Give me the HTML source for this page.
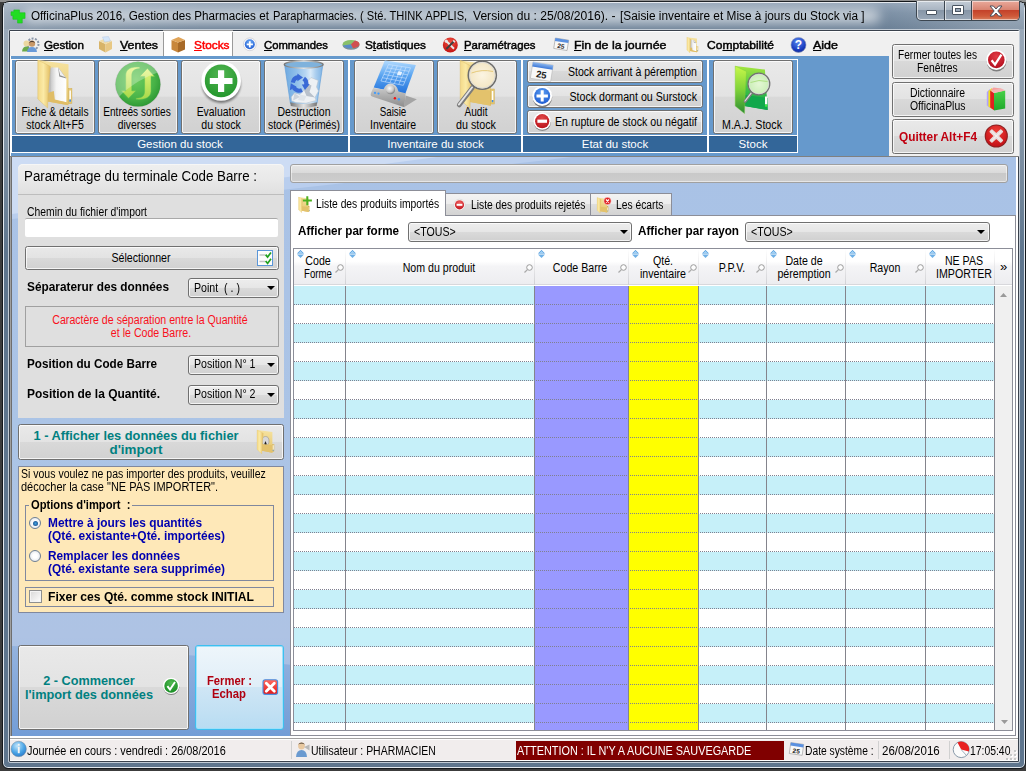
<!DOCTYPE html>
<html lang="fr"><head><meta charset="utf-8"><title>OfficinaPlus 2016</title>
<style>
html,body{margin:0;padding:0;}
body{width:1026px;height:771px;position:relative;overflow:hidden;background:#3c3c3c;
 font-family:"Liberation Sans",sans-serif;font-size:12px;}
div,span.t,svg{position:absolute;box-sizing:border-box;}
span.t{white-space:pre;display:block;}
svg{overflow:visible;}
.btn{border:1px solid #707070;border-radius:2.5px;
 background:linear-gradient(#e9e9e9 0%,#e3e3e3 49%,#d9d9d9 50%,#d1d1d1 100%);
 box-shadow:inset 0 0 0 1px rgba(255,255,255,.75);}
.combo{border:1px solid #707070;border-radius:3px;
 background:linear-gradient(#ededed 0%,#e6e6e6 49%,#dadada 50%,#d0d0d0 100%);
 box-shadow:inset 0 0 0 1px rgba(255,255,255,.75);}
.arr{width:0;height:0;border-left:4px solid transparent;border-right:4px solid transparent;border-top:4px solid #000;}

</style></head><body>
<div style="left:0px;top:0px;width:1026px;height:2px;background:#8f8f8f;"></div>
<div style="left:2px;top:1px;width:1024px;height:768px;border:1px solid #14181c;border-radius:7px 7px 6px 6px;background:linear-gradient(#a9b6c4 0px,#a3b1c0 14px,#9aa9b9 28px,#8e9eae 100px,#5f768e 250px,#5f768e 100%);box-shadow:inset 0 0 0 1px #e3e8ee;"></div>
<div style="left:4px;top:3px;width:1020px;height:26px;background:linear-gradient(90deg,rgba(255,255,255,.28) 0px,rgba(255,255,255,.12) 40px,rgba(255,255,255,0) 200px,rgba(255,255,255,0) 880px,rgba(255,255,255,.22) 1000px),linear-gradient(#93a4b7 0px,#7d91a6 10px,#6b8096 26px);"></div>
<div style="left:24px;top:9px;width:856px;height:14px;background:rgba(255,255,255,.62);filter:blur(6px);border-radius:8px;"></div>
<div style="left:8px;top:29px;width:1012px;height:734px;border:1px solid #c3ccd6;border-radius:2px;"></div>
<div style="left:9px;top:30px;width:1010px;height:732px;border:1px solid #3a424d;background:#f0f0f0;border-radius:1px;"></div>
<svg style="left:10.6px;top:8.6px" width="15" height="15" viewBox="0 0 16 16"><path d="M3 1h6v3h6v6h-3v5H7v-4H2V7H0V3h3z" fill="#22dd22"/><path d="M3 1h6v3h6v6h-3v5H7v-4H2V7H0V3h3z" fill="none" stroke="#18c018" stroke-width=".6"/></svg>
<span class="t" style="top:8px;font-size:12.5px;line-height:16px;color:#000;left:30.5px;transform-origin:0 50%;transform:scaleX(0.9338);">OfficinaPlus 2016, Gestion des Pharmacies et</span>
<span class="t" style="top:8px;font-size:12.5px;line-height:16px;color:#000;left:273.4px;transform-origin:0 50%;transform:scaleX(0.8883);">Parapharmacies. ( Sté. THINK APPLIS,</span>
<span class="t" style="top:8px;font-size:12.5px;line-height:16px;color:#000;left:472.9px;transform-origin:0 50%;transform:scaleX(0.9673);">Version du : 25/08/2016). -</span>
<span class="t" style="top:8px;font-size:12.5px;line-height:16px;color:#000;left:619.8px;transform-origin:0 50%;transform:scaleX(0.9464);">[Saisie inventaire et Mise à jours du Stock via ]</span>
<div style="left:916px;top:1px;width:104px;height:20px;border:1px solid #3c4650;border-top:none;border-radius:0 0 5px 5px;overflow:hidden;background:linear-gradient(#c3ccd6 0%,#aab6c3 45%,#8796a7 50%,#9aa8b8 100%);box-shadow:inset 0 0 0 1px rgba(255,255,255,.6);"><div style="left:27px;top:0;width:1px;height:20px;background:#3c4650"></div><div style="left:28px;top:0;width:1px;height:20px;background:rgba(255,255,255,.6)"></div><div style="left:54px;top:0;width:1px;height:20px;background:#3c4650"></div><div style="left:55px;top:0;width:48px;height:19px;background:linear-gradient(#e9a99b 0%,#d98573 45%,#c4422a 50%,#cf5a3a 80%,#d98060 100%);box-shadow:inset 0 0 0 1px rgba(255,255,255,.5)"></div><div style="left:9px;top:9px;width:11px;height:5px;background:#fff;border:1px solid #4a5562;border-radius:1px"></div><div style="left:35px;top:4px;width:12px;height:10px;background:#fff;border:1px solid #4a5562;border-radius:1px"></div><div style="left:38px;top:7px;width:6px;height:4px;background:#9aa8b8;border:1px solid #4a5562"></div><svg style="left:72px;top:4px" width="14" height="12" viewBox="0 0 14 12"><path d="M1 1h3.4L7 4l2.6-3H13L8.8 6l4.2 5H9.6L7 8l-2.6 3H1l4.2-5z" fill="#fff" stroke="#4a4f5c" stroke-width="1"/></svg></div>
<div style="left:10px;top:31px;width:1009px;height:1px;background:#fff;"></div>
<div style="left:163px;top:30px;width:70px;height:27px;background:#fff;border:1px solid #9a9a9a;border-bottom:none;"></div>
<span class="t" style="top:38px;font-size:11.5px;line-height:14px;color:#000;left:44px;transform-origin:0 50%;transform:scaleX(1.0093);-webkit-text-stroke:.45px #000;"><u>G</u>estion</span>
<span class="t" style="top:38px;font-size:11.5px;line-height:14px;color:#000;left:120px;transform-origin:0 50%;transform:scaleX(1.0805);-webkit-text-stroke:.45px #000;"><u>V</u>entes</span>
<span class="t" style="top:38px;font-size:11.5px;line-height:14px;color:#ff0000;left:194px;transform-origin:0 50%;transform:scaleX(1.0286);-webkit-text-stroke:.45px #ff0000;"><u>S</u>tocks</span>
<span class="t" style="top:38px;font-size:11.5px;line-height:14px;color:#000;left:264px;transform-origin:0 50%;transform:scaleX(0.9817);-webkit-text-stroke:.45px #000;"><u>C</u>ommandes</span>
<span class="t" style="top:38px;font-size:11.5px;line-height:14px;color:#000;left:365px;transform-origin:0 50%;transform:scaleX(1.0261);-webkit-text-stroke:.45px #000;">S<u>t</u>atistiques</span>
<span class="t" style="top:38px;font-size:11.5px;line-height:14px;color:#000;left:464px;transform-origin:0 50%;transform:scaleX(0.9899);-webkit-text-stroke:.45px #000;"><u>P</u>aramétrages</span>
<span class="t" style="top:38px;font-size:11.5px;line-height:14px;color:#000;left:574px;transform-origin:0 50%;transform:scaleX(1.0797);-webkit-text-stroke:.45px #000;"><u>F</u>in de la journée</span>
<span class="t" style="top:38px;font-size:11.5px;line-height:14px;color:#000;left:707px;transform-origin:0 50%;transform:scaleX(1.0482);-webkit-text-stroke:.45px #000;">Co<u>m</u>ptabilité</span>
<span class="t" style="top:38px;font-size:11.5px;line-height:14px;color:#000;left:813px;transform-origin:0 50%;transform:scaleX(1.0861);-webkit-text-stroke:.45px #000;"><u>A</u>ide</span>
<div style="left:10px;top:56px;width:879px;height:100px;background:#6699cc;border-left:1px solid #fff;"></div>
<div style="left:10px;top:156px;width:1009px;height:1px;background:#808080;"></div>
<div style="left:889px;top:31px;width:130px;height:125px;background:#f0f0f0;"></div>
<div style="left:10px;top:31px;width:1009px;height:1px;background:#fff;"></div>
<div style="left:11px;top:59px;width:338px;height:94px;border:1px solid #fff;"></div>
<div style="left:12px;top:135px;width:336px;height:1px;background:#fff;"></div>
<div style="left:12px;top:136px;width:336px;height:16px;background:linear-gradient(#2a5a90 0px,#336699 1.5px);"></div>
<span class="t" style="top:137px;font-size:11.5px;line-height:14px;color:#fff;left:180.0px;transform-origin:50% 50%;transform:translateX(-50%) scaleX(1.0000);">Gestion du stock</span>
<div style="left:349px;top:59px;width:173px;height:94px;border:1px solid #fff;"></div>
<div style="left:350px;top:135px;width:171px;height:1px;background:#fff;"></div>
<div style="left:350px;top:136px;width:171px;height:16px;background:linear-gradient(#2a5a90 0px,#336699 1.5px);"></div>
<span class="t" style="top:137px;font-size:11.5px;line-height:14px;color:#fff;left:435.5px;transform-origin:50% 50%;transform:translateX(-50%) scaleX(1.0000);">Inventaire du stock</span>
<div style="left:522px;top:59px;width:186px;height:94px;border:1px solid #fff;"></div>
<div style="left:523px;top:135px;width:184px;height:1px;background:#fff;"></div>
<div style="left:523px;top:136px;width:184px;height:16px;background:linear-gradient(#2a5a90 0px,#336699 1.5px);"></div>
<span class="t" style="top:137px;font-size:11.5px;line-height:14px;color:#fff;left:615.0px;transform-origin:50% 50%;transform:translateX(-50%) scaleX(1.0000);">Etat du stock</span>
<div style="left:708px;top:59px;width:90px;height:94px;border:1px solid #fff;"></div>
<div style="left:709px;top:135px;width:88px;height:1px;background:#fff;"></div>
<div style="left:709px;top:136px;width:88px;height:16px;background:linear-gradient(#2a5a90 0px,#336699 1.5px);"></div>
<span class="t" style="top:137px;font-size:11.5px;line-height:14px;color:#fff;left:753.0px;transform-origin:50% 50%;transform:translateX(-50%) scaleX(1.0000);">Stock</span>
<div class="btn" style="left:15px;top:60px;width:80px;height:74px;"></div>
<span class="t" style="top:104px;font-size:12px;line-height:16px;color:#000;left:55px;transform-origin:50% 50%;transform:translateX(-50%) scaleX(0.8513);">Fiche &amp; détails</span>
<span class="t" style="top:117px;font-size:12px;line-height:16px;color:#000;left:55px;transform-origin:50% 50%;transform:translateX(-50%) scaleX(0.8752);">stock Alt+F5</span>
<div class="btn" style="left:98px;top:60px;width:80px;height:74px;"></div>
<span class="t" style="top:104px;font-size:12px;line-height:16px;color:#000;left:137.3px;transform-origin:50% 50%;transform:translateX(-50%) scaleX(0.8446);">Entreés sorties</span>
<span class="t" style="top:117px;font-size:12px;line-height:16px;color:#000;left:137.3px;transform-origin:50% 50%;transform:translateX(-50%) scaleX(0.8616);">diverses</span>
<div class="btn" style="left:181px;top:60px;width:80px;height:74px;"></div>
<span class="t" style="top:104px;font-size:12px;line-height:16px;color:#000;left:220.8px;transform-origin:50% 50%;transform:translateX(-50%) scaleX(0.8690);">Evaluation</span>
<span class="t" style="top:117px;font-size:12px;line-height:16px;color:#000;left:220.8px;transform-origin:50% 50%;transform:translateX(-50%) scaleX(0.8839);">du stock</span>
<div class="btn" style="left:264px;top:60px;width:80px;height:74px;"></div>
<span class="t" style="top:104px;font-size:12px;line-height:16px;color:#000;left:303.8px;transform-origin:50% 50%;transform:translateX(-50%) scaleX(0.8733);">Destruction</span>
<span class="t" style="top:117px;font-size:12px;line-height:16px;color:#000;left:303.8px;transform-origin:50% 50%;transform:translateX(-50%) scaleX(0.8639);">stock (Périmés)</span>
<div class="btn" style="left:354px;top:60px;width:80px;height:74px;"></div>
<span class="t" style="top:104px;font-size:12px;line-height:16px;color:#000;left:392.7px;transform-origin:50% 50%;transform:translateX(-50%) scaleX(0.8138);">Saisie</span>
<span class="t" style="top:117px;font-size:12px;line-height:16px;color:#000;left:392.7px;transform-origin:50% 50%;transform:translateX(-50%) scaleX(0.8729);">Inventaire</span>
<div class="btn" style="left:437px;top:60px;width:80px;height:74px;"></div>
<span class="t" style="top:104px;font-size:12px;line-height:16px;color:#000;left:475.9px;transform-origin:50% 50%;transform:translateX(-50%) scaleX(0.8409);">Audit</span>
<span class="t" style="top:117px;font-size:12px;line-height:16px;color:#000;left:475.9px;transform-origin:50% 50%;transform:translateX(-50%) scaleX(0.8951);">du stock</span>
<div class="btn" style="left:713px;top:60px;width:80px;height:74px;"></div>
<span class="t" style="top:117px;font-size:12px;line-height:16px;color:#000;left:752.1px;transform-origin:50% 50%;transform:translateX(-50%) scaleX(0.8909);">M.A.J. Stock</span>
<div class="btn" style="left:527px;top:60px;width:176px;height:23px;"></div>
<span class="t" style="top:64px;font-size:12px;line-height:16px;color:#000;left:697px;transform-origin:100% 50%;transform:translateX(-100%) scaleX(0.8791);">Stock arrivant à péremption</span>
<div class="btn" style="left:527px;top:85px;width:176px;height:23px;"></div>
<span class="t" style="top:89px;font-size:12px;line-height:16px;color:#000;left:697px;transform-origin:100% 50%;transform:translateX(-100%) scaleX(0.8850);">Stock dormant ou Surstock</span>
<div class="btn" style="left:527px;top:110px;width:176px;height:24px;"></div>
<span class="t" style="top:114px;font-size:12px;line-height:16px;color:#000;left:697px;transform-origin:100% 50%;transform:translateX(-100%) scaleX(0.8869);">En rupture de stock ou négatif</span>
<div class="btn" style="left:892px;top:44px;width:122px;height:35px;"></div>
<div class="btn" style="left:892px;top:82px;width:122px;height:35px;"></div>
<div class="btn" style="left:892px;top:119px;width:122px;height:35px;"></div>
<span class="t" style="top:47px;font-size:12px;line-height:16px;color:#000;left:898.4px;transform-origin:0 50%;transform:scaleX(0.8461);">Fermer toutes les</span>
<span class="t" style="top:60px;font-size:12px;line-height:16px;color:#000;left:917.1px;transform-origin:0 50%;transform:scaleX(0.8573);">Fenêtres</span>
<span class="t" style="top:85px;font-size:12px;line-height:16px;color:#000;left:910.2px;transform-origin:0 50%;transform:scaleX(0.8680);">Dictionnaire</span>
<span class="t" style="top:98px;font-size:12px;line-height:16px;color:#000;left:909.9px;transform-origin:0 50%;transform:scaleX(0.8682);">OfficinaPlus</span>
<span class="t" style="top:129px;font-size:12px;line-height:16px;color:#c00010;font-weight:bold;left:898.7px;transform-origin:0 50%;transform:scaleX(0.9845);">Quitter Alt+F4</span>
<div style="left:10px;top:157px;width:1008px;height:579px;background:linear-gradient(#a9c2e6 0px,#abc4e6 270px,#aec3e4 480px,#a4bde3 520px,#739dd6 579px);"></div>
<div style="left:10px;top:157px;width:1px;height:581px;background:#a0a0a0;"></div>
<div style="left:11px;top:157px;width:1px;height:579px;background:#6e6e6e;"></div>
<div style="left:1016px;top:157px;width:2px;height:581px;background:#fff;"></div>
<div style="left:10px;top:736px;width:1008px;height:2px;background:#fff;"></div>
<svg style="left:12px;top:640px" width="1004" height="96" viewBox="0 0 1004 96"><defs><linearGradient id="sw2" x1="0" y1="0" x2="0" y2="1"><stop offset="0" stop-color="#94b3df"/><stop offset="1" stop-color="#739dd6"/></linearGradient></defs><path d="M0 6Q150 10 290 26V96H0Z" fill="url(#sw2)"/></svg>
<div style="left:10px;top:738px;width:1008px;height:23px;background:#f1eded;border-top:1px solid #a0a0a0;border-bottom:1px solid #fff;box-shadow:inset 0 1px 0 #fff;"></div>
<svg style="left:12px;top:157px" width="1007" height="70" viewBox="0 0 1007 70"><path d="M0 0H560Q360 24 0 62Z" fill="#b9ceee"/><path d="M0 0H425Q290 18 0 57Z" fill="#cddcf4"/></svg>
<div style="left:18px;top:164px;width:266px;height:254px;background:#dfdfdf;border-radius:5px 5px 0 0;"></div>
<div style="left:18px;top:164px;width:266px;height:31px;background:linear-gradient(#efefef,#e9e9e9 50%,#e0e0e0);border-radius:5px 5px 0 0;border-bottom:1px solid #bdbdbd;box-shadow:inset 0 1px 0 #f6f6f6;"></div>
<span class="t" style="top:167px;font-size:14px;line-height:18px;color:#000;left:24px;transform-origin:0 50%;transform:scaleX(0.9505);">Paramétrage du terminale Code Barre :</span>
<span class="t" style="top:204px;font-size:12px;line-height:16px;color:#000;left:26.5px;transform-origin:0 50%;transform:scaleX(0.8632);">Chemin du fichier d'import</span>
<div style="left:25px;top:218px;width:253px;height:19px;background:#fff;border-top:1px solid #a9a9a9;border-radius:2px;"></div>
<div class="btn" style="left:25px;top:246px;width:254px;height:24px;"></div>
<span class="t" style="top:250px;font-size:12px;line-height:16px;color:#000;left:141px;transform-origin:50% 50%;transform:translateX(-50%) scaleX(0.8850);">Sélectionner</span>
<span class="t" style="top:279px;font-size:12.5px;line-height:16px;color:#000;font-weight:bold;left:27px;transform-origin:0 50%;transform:scaleX(0.9463);">Séparaterur des données</span>
<div class="combo" style="left:188px;top:278px;width:91px;height:20px;"></div>
<span class="t" style="top:280px;font-size:12px;line-height:16px;color:#000;left:194px;transform-origin:0 50%;transform:scaleX(0.8850);">Point  ( . )</span>
<div class="arr" style="left:267px;top:286px;width:0px;height:0px;"></div>
<div style="left:25px;top:306px;width:254px;height:41px;border:1px solid #a0a0a0;"></div>
<span class="t" style="top:312px;font-size:12px;line-height:16px;color:#f8101c;left:149.5px;transform-origin:50% 50%;transform:translateX(-50%) scaleX(0.8850);">Caractère de séparation entre la Quantité</span>
<span class="t" style="top:325px;font-size:12px;line-height:16px;color:#f8101c;left:151px;transform-origin:50% 50%;transform:translateX(-50%) scaleX(0.8850);">et le Code Barre.</span>
<span class="t" style="top:356px;font-size:12.5px;line-height:16px;color:#000;font-weight:bold;left:27px;transform-origin:0 50%;transform:scaleX(0.9359);">Position du Code Barre</span>
<div class="combo" style="left:188px;top:355px;width:91px;height:20px;"></div>
<span class="t" style="top:356px;font-size:12px;line-height:16px;color:#000;left:194px;transform-origin:0 50%;transform:scaleX(0.8850);">Position N° 1</span>
<div class="arr" style="left:267px;top:363px;width:0px;height:0px;"></div>
<span class="t" style="top:386px;font-size:12.5px;line-height:16px;color:#000;font-weight:bold;left:27px;transform-origin:0 50%;transform:scaleX(0.9575);">Position de la Quantité.</span>
<div class="combo" style="left:188px;top:385px;width:91px;height:20px;"></div>
<span class="t" style="top:386px;font-size:12px;line-height:16px;color:#000;left:194px;transform-origin:0 50%;transform:scaleX(0.8850);">Position N° 2</span>
<div class="arr" style="left:267px;top:393px;width:0px;height:0px;"></div>
<div class="btn" style="left:18px;top:424px;width:266px;height:36px;"></div>
<span class="t" style="top:427px;font-size:13px;line-height:17px;color:#008080;font-weight:bold;left:136px;transform-origin:50% 50%;transform:translateX(-50%) scaleX(0.9842);">1 - Afficher les données du fichier</span>
<span class="t" style="top:441px;font-size:13px;line-height:17px;color:#008080;font-weight:bold;left:136px;transform-origin:50% 50%;transform:translateX(-50%) scaleX(1.0296);">d'import</span>
<div style="left:18px;top:466px;width:266px;height:147px;background:#fee8b8;border:1px solid #80889e;"></div>
<span class="t" style="top:466px;font-size:12px;line-height:16px;color:#000;left:20.7px;transform-origin:0 50%;transform:scaleX(0.8759);">Si vous voulez ne pas importer des produits, veuillez</span>
<span class="t" style="top:479px;font-size:12px;line-height:16px;color:#000;left:20.7px;transform-origin:0 50%;transform:scaleX(0.9142);">décocher la case "NE PAS IMPORTER".</span>
<div style="left:25px;top:505px;width:249px;height:76px;border:1px solid #80889e;"></div>
<div style="left:29px;top:498px;width:103px;height:14px;background:#fee8b8;"></div>
<span class="t" style="top:497px;font-size:12px;line-height:16px;color:#000;font-weight:bold;left:30.8px;transform-origin:0 50%;transform:scaleX(0.9313);">Options d'import  :</span>
<span class="t" style="top:515px;font-size:12px;line-height:16px;color:#0000b0;font-weight:bold;left:48px;transform-origin:0 50%;transform:scaleX(0.9911);">Mettre à jours les quantités</span>
<span class="t" style="top:528px;font-size:12px;line-height:16px;color:#0000b0;font-weight:bold;left:48px;transform-origin:0 50%;transform:scaleX(0.9959);">(Qté. existante+Qté. importées)</span>
<span class="t" style="top:548px;font-size:12px;line-height:16px;color:#0000b0;font-weight:bold;left:48px;transform-origin:0 50%;transform:scaleX(0.9846);">Remplacer les données</span>
<span class="t" style="top:561px;font-size:12px;line-height:16px;color:#0000b0;font-weight:bold;left:48px;transform-origin:0 50%;transform:scaleX(0.9903);">(Qté. existante sera supprimée)</span>
<div style="left:29px;top:517px;width:12px;height:12px;border-radius:50%;border:1px solid #6d7f93;background:radial-gradient(#fff 30%,#d8dde3 100%);"><div style="left:2.5px;top:2.5px;width:5px;height:5px;border-radius:50%;background:radial-gradient(#3fa0e0,#103a78)"></div></div>
<div style="left:29px;top:550px;width:12px;height:12px;border-radius:50%;border:1px solid #6d7f93;background:radial-gradient(#fff 30%,#d8dde3 100%);"></div>
<div style="left:25px;top:587px;width:249px;height:20px;border:1px solid #80889e;"></div>
<div style="left:29px;top:590px;width:13px;height:13px;border:1px solid #8e8f8f;background:linear-gradient(135deg,#d8d8d8,#fff);box-shadow:inset 0 0 0 1px #f4f4f4;"></div>
<span class="t" style="top:589px;font-size:12px;line-height:16px;color:#000;font-weight:bold;left:48px;transform-origin:0 50%;transform:scaleX(1.0094);">Fixer ces Qté. comme stock INITIAL</span>
<div class="btn" style="left:18px;top:645px;width:171px;height:85px;"></div>
<span class="t" style="top:672px;font-size:13px;line-height:17px;color:#008080;font-weight:bold;left:89.3px;transform-origin:50% 50%;transform:translateX(-50%) scaleX(0.9742);">2 - Commencer</span>
<span class="t" style="top:686px;font-size:13px;line-height:17px;color:#008080;font-weight:bold;left:89.2px;transform-origin:50% 50%;transform:translateX(-50%) scaleX(0.9829);">l'import des données</span>
<div style="left:195px;top:645px;width:89px;height:85px;border:1px solid #3cc0f0;border-radius:3px;background:linear-gradient(#eef6fb 0%,#e0eef8 49%,#cfe6f5 50%,#b8dcf2 100%);box-shadow:inset 0 0 0 1px #9fe0fa;"></div>
<span class="t" style="top:673px;font-size:12px;line-height:16px;color:#b00010;font-weight:bold;left:206.6px;transform-origin:0 50%;transform:scaleX(0.9372);">Fermer :</span>
<span class="t" style="top:686px;font-size:12px;line-height:16px;color:#b00010;font-weight:bold;left:211.7px;transform-origin:0 50%;transform:scaleX(0.9441);">Echap</span>
<div style="left:290px;top:164px;width:718px;height:19px;border:1px solid #a0a0a0;border-radius:3px;background:linear-gradient(#e6e6e6 0%,#dadada 45%,#c9c9c9 50%,#cdcdcd 100%);box-shadow:inset 0 0 0 1px rgba(255,255,255,.5);"></div>
<div style="left:290px;top:215px;width:726px;height:521px;background:#fff;border:1px solid #8c8e98;"></div>
<div style="left:445px;top:193px;width:146px;height:23px;border:1px solid #8c8e98;background:linear-gradient(#f3f3f3 0%,#ececec 49%,#dedede 50%,#d3d3d3 100%);"></div>
<div style="left:590px;top:193px;width:82px;height:23px;border:1px solid #8c8e98;background:linear-gradient(#f3f3f3 0%,#ececec 49%,#dedede 50%,#d3d3d3 100%);"></div>
<div style="left:290px;top:190px;width:156px;height:25px;border:1px solid #8c8e98;border-bottom:none;background:#fff;"></div>
<div style="left:291px;top:215px;width:154px;height:1px;background:#fff;"></div>
<span class="t" style="top:196px;font-size:12px;line-height:16px;color:#000;left:316.2px;transform-origin:0 50%;transform:scaleX(0.8591);">Liste des produits importés</span>
<span class="t" style="top:197px;font-size:12px;line-height:16px;color:#000;left:470.5px;transform-origin:0 50%;transform:scaleX(0.8583);">Liste des produits rejetés</span>
<span class="t" style="top:197px;font-size:12px;line-height:16px;color:#000;left:615.6px;transform-origin:0 50%;transform:scaleX(0.8562);">Les écarts</span>
<span class="t" style="top:222px;font-size:13px;line-height:17px;color:#000;font-weight:bold;left:297.5px;transform-origin:0 50%;transform:scaleX(0.8963);">Afficher par forme</span>
<div class="combo" style="left:408px;top:222px;width:224px;height:20px;"></div>
<span class="t" style="top:224px;font-size:12px;line-height:16px;color:#000;left:414px;transform-origin:0 50%;transform:scaleX(0.8850);">&lt;TOUS&gt;</span>
<div class="arr" style="left:620px;top:230px;width:0px;height:0px;"></div>
<span class="t" style="top:222px;font-size:13px;line-height:17px;color:#000;font-weight:bold;left:638px;transform-origin:0 50%;transform:scaleX(0.9020);">Afficher par rayon</span>
<div class="combo" style="left:745px;top:222px;width:245px;height:20px;"></div>
<span class="t" style="top:224px;font-size:12px;line-height:16px;color:#000;left:751px;transform-origin:0 50%;transform:scaleX(0.8850);">&lt;TOUS&gt;</span>
<div class="arr" style="left:977px;top:230px;width:0px;height:0px;"></div>
<div style="left:293px;top:248px;width:720px;height:483px;border:1px solid #8c8e98;background:#fff;"></div>
<div style="left:294px;top:249px;width:718px;height:36px;background:linear-gradient(#fff 0%,#fff 35%,#f4f4f6 50%,#ededf0 100%);border-bottom:1px solid #d8d8dc;"></div>
<div style="left:294px;top:286px;width:701px;height:444px;background:repeating-linear-gradient(#c6f0f9 0px,#c6f0f9 19px,#fff 19px,#fff 38px);"></div>
<div style="left:535px;top:286px;width:94px;height:444px;background:#9999ff;"></div>
<div style="left:629px;top:286px;width:70px;height:444px;background:#ffff00;"></div>
<div style="left:294px;top:304px;width:701px;height:1px;background:repeating-linear-gradient(90deg,#808090 0px,#808090 1px,transparent 1px,transparent 2px);"></div>
<div style="left:294px;top:323px;width:701px;height:1px;background:repeating-linear-gradient(90deg,#808090 0px,#808090 1px,transparent 1px,transparent 2px);"></div>
<div style="left:294px;top:342px;width:701px;height:1px;background:repeating-linear-gradient(90deg,#808090 0px,#808090 1px,transparent 1px,transparent 2px);"></div>
<div style="left:294px;top:361px;width:701px;height:1px;background:repeating-linear-gradient(90deg,#808090 0px,#808090 1px,transparent 1px,transparent 2px);"></div>
<div style="left:294px;top:380px;width:701px;height:1px;background:repeating-linear-gradient(90deg,#808090 0px,#808090 1px,transparent 1px,transparent 2px);"></div>
<div style="left:294px;top:399px;width:701px;height:1px;background:repeating-linear-gradient(90deg,#808090 0px,#808090 1px,transparent 1px,transparent 2px);"></div>
<div style="left:294px;top:418px;width:701px;height:1px;background:repeating-linear-gradient(90deg,#808090 0px,#808090 1px,transparent 1px,transparent 2px);"></div>
<div style="left:294px;top:437px;width:701px;height:1px;background:repeating-linear-gradient(90deg,#808090 0px,#808090 1px,transparent 1px,transparent 2px);"></div>
<div style="left:294px;top:456px;width:701px;height:1px;background:repeating-linear-gradient(90deg,#808090 0px,#808090 1px,transparent 1px,transparent 2px);"></div>
<div style="left:294px;top:475px;width:701px;height:1px;background:repeating-linear-gradient(90deg,#808090 0px,#808090 1px,transparent 1px,transparent 2px);"></div>
<div style="left:294px;top:494px;width:701px;height:1px;background:repeating-linear-gradient(90deg,#808090 0px,#808090 1px,transparent 1px,transparent 2px);"></div>
<div style="left:294px;top:513px;width:701px;height:1px;background:repeating-linear-gradient(90deg,#808090 0px,#808090 1px,transparent 1px,transparent 2px);"></div>
<div style="left:294px;top:532px;width:701px;height:1px;background:repeating-linear-gradient(90deg,#808090 0px,#808090 1px,transparent 1px,transparent 2px);"></div>
<div style="left:294px;top:551px;width:701px;height:1px;background:repeating-linear-gradient(90deg,#808090 0px,#808090 1px,transparent 1px,transparent 2px);"></div>
<div style="left:294px;top:570px;width:701px;height:1px;background:repeating-linear-gradient(90deg,#808090 0px,#808090 1px,transparent 1px,transparent 2px);"></div>
<div style="left:294px;top:589px;width:701px;height:1px;background:repeating-linear-gradient(90deg,#808090 0px,#808090 1px,transparent 1px,transparent 2px);"></div>
<div style="left:294px;top:608px;width:701px;height:1px;background:repeating-linear-gradient(90deg,#808090 0px,#808090 1px,transparent 1px,transparent 2px);"></div>
<div style="left:294px;top:627px;width:701px;height:1px;background:repeating-linear-gradient(90deg,#808090 0px,#808090 1px,transparent 1px,transparent 2px);"></div>
<div style="left:294px;top:646px;width:701px;height:1px;background:repeating-linear-gradient(90deg,#808090 0px,#808090 1px,transparent 1px,transparent 2px);"></div>
<div style="left:294px;top:665px;width:701px;height:1px;background:repeating-linear-gradient(90deg,#808090 0px,#808090 1px,transparent 1px,transparent 2px);"></div>
<div style="left:294px;top:684px;width:701px;height:1px;background:repeating-linear-gradient(90deg,#808090 0px,#808090 1px,transparent 1px,transparent 2px);"></div>
<div style="left:294px;top:703px;width:701px;height:1px;background:repeating-linear-gradient(90deg,#808090 0px,#808090 1px,transparent 1px,transparent 2px);"></div>
<div style="left:294px;top:722px;width:701px;height:1px;background:repeating-linear-gradient(90deg,#808090 0px,#808090 1px,transparent 1px,transparent 2px);"></div>
<div style="left:345px;top:286px;width:1px;height:444px;background:#84848c;"></div>
<div style="left:345px;top:249px;width:1px;height:36px;background:linear-gradient(#fff 0%,#d0d0d4 100%);"></div>
<div style="left:534px;top:286px;width:1px;height:444px;background:#84848c;"></div>
<div style="left:534px;top:249px;width:1px;height:36px;background:linear-gradient(#fff 0%,#d0d0d4 100%);"></div>
<div style="left:628px;top:286px;width:1px;height:444px;background:#84848c;"></div>
<div style="left:628px;top:249px;width:1px;height:36px;background:linear-gradient(#fff 0%,#d0d0d4 100%);"></div>
<div style="left:698px;top:286px;width:1px;height:444px;background:#84848c;"></div>
<div style="left:698px;top:249px;width:1px;height:36px;background:linear-gradient(#fff 0%,#d0d0d4 100%);"></div>
<div style="left:766px;top:286px;width:1px;height:444px;background:#84848c;"></div>
<div style="left:766px;top:249px;width:1px;height:36px;background:linear-gradient(#fff 0%,#d0d0d4 100%);"></div>
<div style="left:845px;top:286px;width:1px;height:444px;background:#84848c;"></div>
<div style="left:845px;top:249px;width:1px;height:36px;background:linear-gradient(#fff 0%,#d0d0d4 100%);"></div>
<div style="left:925px;top:286px;width:1px;height:444px;background:#84848c;"></div>
<div style="left:925px;top:249px;width:1px;height:36px;background:linear-gradient(#fff 0%,#d0d0d4 100%);"></div>
<div style="left:994px;top:286px;width:1px;height:444px;background:#84848c;"></div>
<div style="left:994px;top:249px;width:1px;height:36px;background:linear-gradient(#fff 0%,#d0d0d4 100%);"></div>
<div style="left:995px;top:286px;width:17px;height:444px;background:#f0f0f0;"></div>
<svg style="left:297px;top:250px" width="7" height="8" viewBox="0 0 8 9"><path d="M4 0L8 4H0Z" fill="#3f8fd6"/><path d="M0 5H8L4 9Z" fill="#6fb0e6"/><path d="M4 .8L7 3.6H1Z" fill="#9fd0f4"/></svg>
<svg style="left:335px;top:264px" width="9" height="9" viewBox="0 0 9 9"><circle cx="5.5" cy="3.5" r="2.8" fill="#fdfdfd" stroke="#9a9a9a" stroke-width="1"/><path d="M3.4 5.6L.5 8.5" stroke="#a8a8a8" stroke-width="1.2"/></svg>
<span class="t" style="top:253px;font-size:12px;line-height:16px;color:#000;left:318px;transform-origin:50% 50%;transform:translateX(-50%) scaleX(0.8850);">Code</span>
<span class="t" style="top:266px;font-size:12px;line-height:16px;color:#000;left:318px;transform-origin:50% 50%;transform:translateX(-50%) scaleX(0.8018);">Forme</span>
<svg style="left:349px;top:250px" width="7" height="8" viewBox="0 0 8 9"><path d="M4 0L8 4H0Z" fill="#3f8fd6"/><path d="M0 5H8L4 9Z" fill="#6fb0e6"/><path d="M4 .8L7 3.6H1Z" fill="#9fd0f4"/></svg>
<svg style="left:524px;top:264px" width="9" height="9" viewBox="0 0 9 9"><circle cx="5.5" cy="3.5" r="2.8" fill="#fdfdfd" stroke="#9a9a9a" stroke-width="1"/><path d="M3.4 5.6L.5 8.5" stroke="#a8a8a8" stroke-width="1.2"/></svg>
<span class="t" style="top:260px;font-size:12px;line-height:16px;color:#000;left:438.5px;transform-origin:50% 50%;transform:translateX(-50%) scaleX(0.8850);">Nom du produit</span>
<svg style="left:538px;top:250px" width="7" height="8" viewBox="0 0 8 9"><path d="M4 0L8 4H0Z" fill="#3f8fd6"/><path d="M0 5H8L4 9Z" fill="#6fb0e6"/><path d="M4 .8L7 3.6H1Z" fill="#9fd0f4"/></svg>
<svg style="left:618px;top:264px" width="9" height="9" viewBox="0 0 9 9"><circle cx="5.5" cy="3.5" r="2.8" fill="#fdfdfd" stroke="#9a9a9a" stroke-width="1"/><path d="M3.4 5.6L.5 8.5" stroke="#a8a8a8" stroke-width="1.2"/></svg>
<span class="t" style="top:260px;font-size:12px;line-height:16px;color:#000;left:580.2px;transform-origin:50% 50%;transform:translateX(-50%) scaleX(0.8850);">Code Barre</span>
<svg style="left:632px;top:250px" width="7" height="8" viewBox="0 0 8 9"><path d="M4 0L8 4H0Z" fill="#3f8fd6"/><path d="M0 5H8L4 9Z" fill="#6fb0e6"/><path d="M4 .8L7 3.6H1Z" fill="#9fd0f4"/></svg>
<svg style="left:688px;top:264px" width="9" height="9" viewBox="0 0 9 9"><circle cx="5.5" cy="3.5" r="2.8" fill="#fdfdfd" stroke="#9a9a9a" stroke-width="1"/><path d="M3.4 5.6L.5 8.5" stroke="#a8a8a8" stroke-width="1.2"/></svg>
<span class="t" style="top:253px;font-size:12px;line-height:16px;color:#000;left:662.5px;transform-origin:50% 50%;transform:translateX(-50%) scaleX(0.8850);">Qté.</span>
<span class="t" style="top:266px;font-size:12px;line-height:16px;color:#000;left:662.5px;transform-origin:50% 50%;transform:translateX(-50%) scaleX(0.8850);">inventaire</span>
<svg style="left:702px;top:250px" width="7" height="8" viewBox="0 0 8 9"><path d="M4 0L8 4H0Z" fill="#3f8fd6"/><path d="M0 5H8L4 9Z" fill="#6fb0e6"/><path d="M4 .8L7 3.6H1Z" fill="#9fd0f4"/></svg>
<svg style="left:756px;top:264px" width="9" height="9" viewBox="0 0 9 9"><circle cx="5.5" cy="3.5" r="2.8" fill="#fdfdfd" stroke="#9a9a9a" stroke-width="1"/><path d="M3.4 5.6L.5 8.5" stroke="#a8a8a8" stroke-width="1.2"/></svg>
<span class="t" style="top:260px;font-size:12px;line-height:16px;color:#000;left:731.7px;transform-origin:50% 50%;transform:translateX(-50%) scaleX(0.8850);">P.P.V.</span>
<svg style="left:770px;top:250px" width="7" height="8" viewBox="0 0 8 9"><path d="M4 0L8 4H0Z" fill="#3f8fd6"/><path d="M0 5H8L4 9Z" fill="#6fb0e6"/><path d="M4 .8L7 3.6H1Z" fill="#9fd0f4"/></svg>
<svg style="left:835px;top:264px" width="9" height="9" viewBox="0 0 9 9"><circle cx="5.5" cy="3.5" r="2.8" fill="#fdfdfd" stroke="#9a9a9a" stroke-width="1"/><path d="M3.4 5.6L.5 8.5" stroke="#a8a8a8" stroke-width="1.2"/></svg>
<span class="t" style="top:253px;font-size:12px;line-height:16px;color:#000;left:803.5px;transform-origin:50% 50%;transform:translateX(-50%) scaleX(0.8850);">Date de</span>
<span class="t" style="top:266px;font-size:12px;line-height:16px;color:#000;left:803.5px;transform-origin:50% 50%;transform:translateX(-50%) scaleX(0.8850);">péremption</span>
<svg style="left:849px;top:250px" width="7" height="8" viewBox="0 0 8 9"><path d="M4 0L8 4H0Z" fill="#3f8fd6"/><path d="M0 5H8L4 9Z" fill="#6fb0e6"/><path d="M4 .8L7 3.6H1Z" fill="#9fd0f4"/></svg>
<svg style="left:915px;top:264px" width="9" height="9" viewBox="0 0 9 9"><circle cx="5.5" cy="3.5" r="2.8" fill="#fdfdfd" stroke="#9a9a9a" stroke-width="1"/><path d="M3.4 5.6L.5 8.5" stroke="#a8a8a8" stroke-width="1.2"/></svg>
<span class="t" style="top:260px;font-size:12px;line-height:16px;color:#000;left:884.5px;transform-origin:50% 50%;transform:translateX(-50%) scaleX(0.8850);">Rayon</span>
<svg style="left:929px;top:250px" width="7" height="8" viewBox="0 0 8 9"><path d="M4 0L8 4H0Z" fill="#3f8fd6"/><path d="M0 5H8L4 9Z" fill="#6fb0e6"/><path d="M4 .8L7 3.6H1Z" fill="#9fd0f4"/></svg>
<span class="t" style="top:253px;font-size:12px;line-height:16px;color:#000;left:963.5px;transform-origin:50% 50%;transform:translateX(-50%) scaleX(0.8850);">NE PAS</span>
<span class="t" style="top:266px;font-size:12px;line-height:16px;color:#000;left:963.5px;transform-origin:50% 50%;transform:translateX(-50%) scaleX(0.8850);">IMPORTER</span>
<span class="t" style="top:258px;font-size:13px;line-height:17px;color:#000;left:1003.5px;transform-origin:50% 50%;transform:translateX(-50%) scaleX(1.0000);">»</span>
<svg style="left:1000px;top:293px" width="7" height="4" viewBox="0 0 9 5"><path d="M0 5L4.5 0L9 5Z" fill="#9a9a9a"/></svg>
<svg style="left:1001px;top:720px" width="7" height="4" viewBox="0 0 9 5"><path d="M0 0H9L4.5 5Z" fill="#9a9a9a"/></svg>
<span class="t" style="top:743px;font-size:12px;line-height:16px;color:#000;left:26.9px;transform-origin:0 50%;transform:scaleX(0.9080);">Journée en cours : vendredi : 26/08/2016</span>
<div style="left:291px;top:741px;width:1px;height:18px;background:#d0d0d0;"></div>
<span class="t" style="top:743px;font-size:12px;line-height:16px;color:#000;left:311.4px;transform-origin:0 50%;transform:scaleX(0.8705);">Utilisateur : PHARMACIEN</span>
<div style="left:516px;top:741px;width:268px;height:19px;background:#800000;"></div>
<span class="t" style="top:743px;font-size:12px;line-height:16px;color:#fff;left:517px;transform-origin:0 50%;transform:scaleX(0.9053);">ATTENTION : IL N'Y A AUCUNE SAUVEGARDE</span>
<span class="t" style="top:743px;font-size:12px;line-height:16px;color:#000;left:804.7px;transform-origin:0 50%;transform:scaleX(0.8572);">Date système :</span>
<div style="left:878px;top:741px;width:1px;height:18px;background:#d0d0d0;"></div>
<span class="t" style="top:743px;font-size:12px;line-height:16px;color:#000;left:882.2px;transform-origin:0 50%;transform:scaleX(0.9607);">26/08/2016</span>
<div style="left:949px;top:741px;width:1px;height:18px;background:#d0d0d0;"></div>
<span class="t" style="top:743px;font-size:12px;line-height:16px;color:#000;left:970px;transform-origin:0 50%;transform:scaleX(0.8649);">17:05:40</span>
<div style="left:1014px;top:750px;width:2px;height:2px;background:#b8b8b8;"></div>
<div style="left:1015px;top:751px;width:2px;height:2px;background:#fff;"></div>
<div style="left:1014px;top:750px;width:2px;height:2px;background:#c8c8c8;"></div>
<div style="left:1010px;top:754px;width:2px;height:2px;background:#b8b8b8;"></div>
<div style="left:1011px;top:755px;width:2px;height:2px;background:#fff;"></div>
<div style="left:1010px;top:754px;width:2px;height:2px;background:#c8c8c8;"></div>
<div style="left:1014px;top:754px;width:2px;height:2px;background:#b8b8b8;"></div>
<div style="left:1015px;top:755px;width:2px;height:2px;background:#fff;"></div>
<div style="left:1014px;top:754px;width:2px;height:2px;background:#c8c8c8;"></div>
<div style="left:1006px;top:758px;width:2px;height:2px;background:#b8b8b8;"></div>
<div style="left:1007px;top:759px;width:2px;height:2px;background:#fff;"></div>
<div style="left:1006px;top:758px;width:2px;height:2px;background:#c8c8c8;"></div>
<div style="left:1010px;top:758px;width:2px;height:2px;background:#b8b8b8;"></div>
<div style="left:1011px;top:759px;width:2px;height:2px;background:#fff;"></div>
<div style="left:1010px;top:758px;width:2px;height:2px;background:#c8c8c8;"></div>
<div style="left:1014px;top:758px;width:2px;height:2px;background:#b8b8b8;"></div>
<div style="left:1015px;top:759px;width:2px;height:2px;background:#fff;"></div>
<div style="left:1014px;top:758px;width:2px;height:2px;background:#c8c8c8;"></div>
<svg style="left:0;top:0" width="1026" height="771" viewBox="0 0 1026 771"><defs><filter id="sh" x="-30%" y="-30%" width="160%" height="170%"><feGaussianBlur stdDeviation="1.1"/></filter><filter id="sh2" x="-30%" y="-30%" width="160%" height="170%"><feGaussianBlur stdDeviation=".6"/></filter><linearGradient id="fyL" x1="0" y1="0" x2="1" y2="0"><stop offset="0" stop-color="#f3d988"/><stop offset="0.45" stop-color="#fbeaa6"/><stop offset="1" stop-color="#e2bd62"/></linearGradient><linearGradient id="fyB" x1="0" y1="0" x2="0" y2="1"><stop offset="0" stop-color="#f6e3a0"/><stop offset="1" stop-color="#e3c36c"/></linearGradient><linearGradient id="doc" x1="0" y1="0" x2="1" y2="0"><stop offset="0" stop-color="#c9c9c9"/><stop offset="0.35" stop-color="#f4f4f4"/><stop offset="1" stop-color="#ffffff"/></linearGradient><radialGradient id="gc" cx="0.45" cy="0.4" r="0.6"><stop offset="0" stop-color="#6ccb5e"/><stop offset="0.7" stop-color="#48b347"/><stop offset="1" stop-color="#2f9a36"/></radialGradient><linearGradient id="ga" x1="0" y1="0" x2="0" y2="1"><stop offset="0" stop-color="#e4f57e"/><stop offset="1" stop-color="#a8d94a"/></linearGradient><clipPath id="gcc"><circle cx="138" cy="84.2" r="22.4"/></clipPath><radialGradient id="gp" cx="0.5" cy="0.3" r="0.75"><stop offset="0" stop-color="#52b552"/><stop offset="1" stop-color="#21952a"/></radialGradient><linearGradient id="rb" x1="0" y1="0" x2="1" y2="0"><stop offset="0" stop-color="#6ea9e0"/><stop offset="0.3" stop-color="#8fbfea"/><stop offset="0.55" stop-color="#b7d6f2"/><stop offset="0.68" stop-color="#d9eaf8"/><stop offset="0.82" stop-color="#a9cdee"/><stop offset="1" stop-color="#7db3e4"/></linearGradient><linearGradient id="rim" x1="0" y1="0" x2="1" y2="0"><stop offset="0" stop-color="#767676"/><stop offset="0.5" stop-color="#e4e4e4"/><stop offset="1" stop-color="#767676"/></linearGradient><linearGradient id="scr" x1="0" y1="0" x2="0" y2="1"><stop offset="0" stop-color="#b4dcff"/><stop offset="0.45" stop-color="#5aa4f0"/><stop offset="1" stop-color="#2272dc"/></linearGradient><linearGradient id="base" x1="0" y1="0" x2="0" y2="1"><stop offset="0" stop-color="#d8d8d8"/><stop offset="0.5" stop-color="#b0b0b0"/><stop offset="1" stop-color="#8c8c8c"/></linearGradient><radialGradient id="knob" cx="0.4" cy="0.35" r="0.6"><stop offset="0" stop-color="#fafafa"/><stop offset="0.7" stop-color="#c8c8c8"/><stop offset="1" stop-color="#8a8a8a"/></radialGradient><radialGradient id="lens" cx="0.5" cy="0.5" r="0.6"><stop offset="0" stop-color="#fbf4e2"/><stop offset="1" stop-color="#f2e3bc"/></radialGradient><linearGradient id="calh" x1="0" y1="0" x2="0" y2="1"><stop offset="0" stop-color="#8fb8ee"/><stop offset="1" stop-color="#3c78d8"/></linearGradient><radialGradient id="bp" cx="0.5" cy="0.3" r="0.75"><stop offset="0" stop-color="#5a9cf0"/><stop offset="1" stop-color="#1a58d0"/></radialGradient><radialGradient id="rm" cx="0.5" cy="0.3" r="0.75"><stop offset="0" stop-color="#e04848"/><stop offset="1" stop-color="#b81018"/></radialGradient><linearGradient id="fgL" x1="0" y1="0" x2="0" y2="1"><stop offset="0" stop-color="#c8f84a"/><stop offset="0.5" stop-color="#7fd238"/><stop offset="1" stop-color="#2c8c34"/></linearGradient><linearGradient id="fgB" x1="0" y1="0" x2="0" y2="1"><stop offset="0" stop-color="#a6e63e"/><stop offset="0.55" stop-color="#3cc048"/><stop offset="1" stop-color="#0c9c48"/></linearGradient><radialGradient id="lens2" cx="0.5" cy="0.5" r="0.6"><stop offset="0" stop-color="#e4f7d4"/><stop offset="1" stop-color="#c4ecb0"/></radialGradient><radialGradient id="rc" cx="0.5" cy="0.3" r="0.75"><stop offset="0" stop-color="#e23a44"/><stop offset="1" stop-color="#b00c1c"/></radialGradient><linearGradient id="bk" x1="0" y1="0" x2="0" y2="1"><stop offset="0" stop-color="#48d048"/><stop offset="1" stop-color="#1ea82a"/></linearGradient><radialGradient id="qx" cx="0.5" cy="0.3" r="0.75"><stop offset="0" stop-color="#f04038"/><stop offset="1" stop-color="#c00c14"/></radialGradient><radialGradient id="tm" cx="0.5" cy="0.3" r="0.75"><stop offset="0" stop-color="#f06060"/><stop offset="1" stop-color="#c01018"/></radialGradient><radialGradient id="gk" cx="0.5" cy="0.3" r="0.75"><stop offset="0" stop-color="#50b850"/><stop offset="1" stop-color="#148a20"/></radialGradient><linearGradient id="rx" x1="0" y1="0" x2="0" y2="1"><stop offset="0" stop-color="#ff6a60"/><stop offset="1" stop-color="#e01818"/></linearGradient><radialGradient id="inf" cx="0.4" cy="0.3" r="0.75"><stop offset="0" stop-color="#bfe4fa"/><stop offset="0.6" stop-color="#4aa4e6"/><stop offset="1" stop-color="#2a78c8"/></radialGradient><radialGradient id="cp" cx="0.5" cy="0.3" r="0.75"><stop offset="0" stop-color="#6aa8f4"/><stop offset="1" stop-color="#1c58d0"/></radialGradient><radialGradient id="pr" cx="0.5" cy="0.3" r="0.75"><stop offset="0" stop-color="#f05040"/><stop offset="1" stop-color="#c01010"/></radialGradient><radialGradient id="aq" cx="0.45" cy="0.3" r="0.75"><stop offset="0" stop-color="#5a8af0"/><stop offset="0.7" stop-color="#1a3cc0"/><stop offset="1" stop-color="#0a2490"/></radialGradient></defs><g transform="translate(37.8 60.0) scale(1.0)"><path d="M0 0L30.7 4.2V45.3L9.8 41.5Z" fill="url(#fyB)"/><path d="M10.5 9L15 7.4L16 37L10.5 40Z" fill="#bdbdbd"/><path d="M13 7.4H20.4L28.6 18.5V42.2L13 39.5Z" fill="url(#doc)"/><path d="M20.4 7.4L28.6 18.5L21.5 16.5Z" fill="#8d8d8d"/><path d="M20.4 7.4L27.5 17.2L22.3 15.2Z" fill="#f0f0f0"/><path d="M9.8 33L16 31L17 39.5L28.6 42.2L30.7 45.3L9.8 41.5Z" fill="#e0bd66"/><rect x="30.5" y="28.5" width="3.6" height="15" fill="#e6c870" stroke="#d0ac54" stroke-width=".5"/><rect x="31.6" y="30.5" width="1.5" height="9" fill="#fff"/><rect x="31.6" y="39.5" width="1.5" height="2.2" fill="#3b8cf0"/><path d="M0 0L12.6 6.4L10.4 30L9.8 48L0 39Z" fill="url(#fyL)" stroke="#d9b860" stroke-width=".4"/></g><circle cx="138" cy="84.2" r="23" fill="#b9b4b8" opacity=".55"/><circle cx="138" cy="84.2" r="22.4" fill="url(#gc)"/><path d="M139.8 67.2C131 66.5 126 69 125.7 75V90.8H121.4L128.5 98.3L136 90.8H131.8V76C131.8 71 134 69 139.8 68.6Z" fill="url(#ga)" stroke="#5cc050" stroke-width=".5"/><path d="M136 99.3C145 100 150.6 97.5 151 91.5V76.4H154.6L147.4 68.4L139.8 76.4H144.6V91C144.6 96 142 98 136 98.2Z" fill="url(#ga)" stroke="#5cc050" stroke-width=".5"/><path d="M112 60H166V70C150 74 130 84 118 98L112 98Z" fill="#fff" opacity=".28" clip-path="url(#gcc)"/><ellipse cx="221.3" cy="84" rx="19.5" ry="19" fill="#000" opacity=".45" filter="url(#sh)"/><circle cx="221.1" cy="80.9" r="19.9" fill="#fff"/><circle cx="221.1" cy="80.9" r="16.3" fill="url(#gp)"/><path d="M218 70.3h6.2v7.6h8.3v6h-8.3v8.1H218v-8.1h-8.2v-6h8.2z" fill="#fff"/><path d="M284.6 65L290.4 103.5Q303.7 107 317 103.5L322.8 65Z" fill="url(#rb)" stroke="#5c9ad6" stroke-width=".6"/><path d="M290.3 102.2Q303.7 105.7 317.1 102.2L316.6 106Q303.7 109.4 290.8 106Z" fill="url(#rim)"/><path d="M291.3 97L294.5 93L300 94.5L304 90L306 83L311 77.5L318.2 80.5L316.5 87L318.5 91L315 97.5L316 100.5L306 103.2L296 102.6L291.8 101Z" fill="#eef1f4" stroke="#b4bec9" stroke-width=".5"/><path d="M306 83L311.5 85.5L309.5 92L315 97.5L306.5 96L304 90Z" fill="#b9c1cb"/><path d="M294.5 93L300 97L293 100.4Z" fill="#cdd4dc"/><path d="M300 94.5L306.5 96L304 101L298 100Z" fill="#dfe4e9"/><g transform="translate(299.4 83.8)" fill="none" stroke="#3a6ad6" stroke-width="4.2"><path d="M-6.6 -1.2A6.8 6.8 0 0 1 -1 -6.7"/><path d="M4.3 -5.3A6.8 6.8 0 0 1 6.6 2"/><path d="M2.6 6.3A6.8 6.8 0 0 1 -5.6 4"/></g><g transform="translate(299.4 83.8)" fill="#3a6ad6"><path d="M-2 -10.4L3.6 -6.2L-2 -2.6Z"/><path d="M10.3 .2L5.6 6.2L2.4 .6Z"/><path d="M-9.6 6.4L-8.6 -.6L-2.8 3Z"/></g><ellipse cx="303.7" cy="64.6" rx="19.4" ry="3.6" fill="#7fb2dc" stroke="url(#rim)" stroke-width="1.4"/><path d="M384.8 60.5L415.9 65L405.2 94L373.7 87.5Z" fill="url(#scr)"/><path d="M388.5 64.5L410.5 67.8M388.5 64.5L380.9 81.0M387.0 67.8L409.1 71.3M392.9 65.2L385.4 81.9M385.5 71.1L407.6 74.8M397.3 65.8L389.9 82.7M383.9 74.4L406.2 78.3M401.7 66.5L394.3 83.6M382.4 77.7L404.7 81.8M406.1 67.1L398.8 84.4M380.9 81.0L403.3 85.3M410.5 67.8L403.3 85.3" stroke="#cfe6ff" stroke-width=".7" fill="none" opacity=".85"/><path d="M398.3 71.3L402.2 71.9L400.8 75.4L396.9 74.7Z" fill="#e8f3ff"/><path d="M404.4 107L416.8 99.3L405.5 95.5Z" fill="#a4a4a4"/><path d="M373.2 88L383.5 89.5Q386 83.5 391 83.6Q396.5 84 398.5 91.5L405.6 93.2L404.4 107.2L372 96.5Q370 95.5 371 93Z" fill="url(#base)"/><circle cx="390.5" cy="89.7" r="4.6" fill="url(#knob)"/><circle cx="375" cy="92.9" r="1.1" fill="#3d9bff"/><circle cx="378.5" cy="93.6" r="1.1" fill="#3d9bff"/><circle cx="394.9" cy="98.3" r="1.2" fill="#f01010"/><circle cx="398.9" cy="99.2" r="1.2" fill="#3d9bff"/><g transform="translate(460.2 60.5) scale(1.0)"><path d="M0 0L30.7 4.2V45.3L9.8 41.5Z" fill="url(#fyB)"/><path d="M9.8 28L30.7 30V45.3L9.8 41.5Z" fill="#e3c26c"/><rect x="30.5" y="28.5" width="3.6" height="15" fill="#e6c870" stroke="#d0ac54" stroke-width=".5"/><rect x="31.6" y="30.5" width="1.5" height="9" fill="#fff"/><rect x="31.6" y="39.5" width="1.5" height="2.2" fill="#3b8cf0"/><path d="M0 0L12.6 6.4L10.4 30L9.8 48L0 39Z" fill="url(#fyL)" stroke="#d9b860" stroke-width=".4"/></g><path d="M472.6 87.5L459.2 105" stroke="#7c7c7c" stroke-width="4.6" stroke-linecap="round"/><path d="M472.2 87.3L458.8 104.6" stroke="#e4e4e4" stroke-width="1.8" stroke-linecap="round"/><circle cx="482.3" cy="75.2" r="14" fill="url(#lens)" stroke="#6e6e6e" stroke-width="1.6"/><circle cx="482.3" cy="75.2" r="12.8" fill="none" stroke="#d8d8d8" stroke-width=".9"/><path d="M471.5 73Q482 69 493 71.5" stroke="#e6c97a" stroke-width="1" fill="none"/><g transform="rotate(9 542 72)"><rect x="531.5" y="63.5" width="20.5" height="16.5" fill="#f8f8f8" stroke="#b8b8b8" stroke-width=".6"/><rect x="531.5" y="63.5" width="20.5" height="4.6" fill="url(#calh)"/><text x="541.8" y="78" font-family="Liberation Sans,sans-serif" font-size="9.5" font-weight="bold" text-anchor="middle" fill="#222">25</text></g><ellipse cx="542.4" cy="97.6" rx="9.8" ry="9.6" fill="#000" opacity=".45" filter="url(#sh2)"/><circle cx="542.2" cy="95.9" r="10" fill="#fff"/><circle cx="542.2" cy="95.9" r="8" fill="url(#bp)"/><path d="M540.7 90.2h3v4.2h4.2v3h-4.2v4.2h-3v-4.2h-4.2v-3h4.2z" fill="#fff"/><ellipse cx="542.4" cy="122.6" rx="8.4" ry="8.2" fill="#000" opacity=".45" filter="url(#sh2)"/><circle cx="542.2" cy="121.2" r="8.6" fill="#fff"/><circle cx="542.2" cy="121.2" r="7.1" fill="url(#rm)"/><rect x="537.4" y="119.6" width="9.6" height="3.2" fill="#fff"/><path d="M735.2 66L764.9 69.5L767.7 110L744.5 106Z" fill="url(#fgB)"/><path d="M744.5 95L767.5 98V110L744.5 106Z" fill="#12a84c"/><rect x="765" y="96.5" width="2.2" height="8" fill="#fff"/><rect x="765" y="104.5" width="2.2" height="2.2" fill="#40f040"/><path d="M735.2 66L746.5 71.5L745.2 93L744.5 113.6L735.2 106Z" fill="url(#fgL)" stroke="#7cc83c" stroke-width=".4"/><path d="M751.5 93L745.2 101.3" stroke="#7c7c7c" stroke-width="3" stroke-linecap="round"/><path d="M751.3 92.8L745 101" stroke="#e4e4e4" stroke-width="1.1" stroke-linecap="round"/><circle cx="758.9" cy="84" r="10.8" fill="url(#lens2)" stroke="#727272" stroke-width="1.4"/><circle cx="758.9" cy="84" r="9.8" fill="none" stroke="#dcdcdc" stroke-width=".8"/><path d="M750.5 82.5Q759 79 767.5 81.5" stroke="#a8dc7a" stroke-width=".9" fill="none"/><ellipse cx="996.5" cy="61.6" rx="10" ry="9.8" fill="#000" opacity=".4" filter="url(#sh2)"/><circle cx="996.3" cy="59.9" r="10.1" fill="#fff"/><circle cx="996.3" cy="59.9" r="8.3" fill="url(#rc)"/><path d="M991.6 60.2L995 64.6L1001.4 54.6" stroke="#fff" stroke-width="2.3" fill="none" stroke-linejoin="miter"/><path d="M986.8 92L990 89V108L986.8 105.5Z" fill="#b0a0ff"/><path d="M988.4 91L992 88V109L988.4 106.5Z" fill="#f0e020"/><path d="M990.2 90.5L993.5 87.4L1001 88.5V90Z" fill="#f6a0a0"/><path d="M990.2 90.5L994 93V110.2L990.2 107.6Z" fill="#e02020"/><path d="M994 93L1005.2 90.6V108.4L994 110.6Z" fill="url(#bk)"/><path d="M990.6 90.4L1001.4 88.6L1005.2 90.6L994 93Z" fill="#f4b4b4"/><circle cx="996.3" cy="136" r="11.6" fill="#8a2020"/><circle cx="996.3" cy="136" r="10.6" fill="url(#qx)"/><path d="M990.3 131.6L991.9 130L996.3 134.2L1000.7 130L1002.3 131.6L998.1 136L1002.3 140.4L1000.7 142L996.3 137.8L991.9 142L990.3 140.4L994.5 136Z" fill="#f4f0f0" stroke="#e8dcdc" stroke-width="1.6" stroke-linejoin="round"/><g transform="translate(257 430) scale(0.5)"><path d="M0 0L30.7 4.2V45.3L9.8 41.5Z" fill="url(#fyB)"/><ellipse cx="17" cy="22" rx="7" ry="9" fill="#d8d8d8" stroke="#8a8a8a" stroke-width="1"/><path d="M13 30L21 30L19.5 40H14.5Z" fill="#f0a020"/><path d="M15 27L17 22L19 27V31H15Z" fill="#202020"/><path d="M9.8 28L30.7 30V45.3L9.8 41.5Z" fill="#e3c26c"/><rect x="30.5" y="28.5" width="3.6" height="15" fill="#e6c870" stroke="#d0ac54" stroke-width=".5"/><rect x="31.6" y="30.5" width="1.5" height="9" fill="#fff"/><rect x="31.6" y="39.5" width="1.5" height="2.2" fill="#3b8cf0"/><path d="M0 0L12.6 6.4L10.4 30L9.8 48L0 39Z" fill="url(#fyL)" stroke="#d9b860" stroke-width=".4"/></g><g transform="translate(298.5 197) scale(0.33)"><path d="M0 0L30.7 4.2V45.3L9.8 41.5Z" fill="url(#fyB)"/><path d="M9.8 28L30.7 30V45.3L9.8 41.5Z" fill="#e3c26c"/><rect x="30.5" y="28.5" width="3.6" height="15" fill="#e6c870" stroke="#d0ac54" stroke-width=".5"/><rect x="31.6" y="30.5" width="1.5" height="9" fill="#fff"/><rect x="31.6" y="39.5" width="1.5" height="2.2" fill="#3b8cf0"/><path d="M0 0L12.6 6.4L10.4 30L9.8 48L0 39Z" fill="url(#fyL)" stroke="#d9b860" stroke-width=".4"/></g><path d="M306.3 196.3h2v3.3h3.6v2h-3.6v3.6h-2v-3.6h-3.4v-2h3.4z" fill="#4cb020"/><circle cx="459.5" cy="204.8" r="5.6" fill="#fff" stroke="#c8c8c8" stroke-width=".5"/><circle cx="459.5" cy="204.8" r="4.6" fill="url(#tm)"/><rect x="456.6" y="203.8" width="5.8" height="2" fill="#fff"/><g transform="translate(597 197.5) scale(0.33)"><path d="M0 0L30.7 4.2V45.3L9.8 41.5Z" fill="url(#fyB)"/><path d="M9.8 28L30.7 30V45.3L9.8 41.5Z" fill="#e3c26c"/><rect x="30.5" y="28.5" width="3.6" height="15" fill="#e6c870" stroke="#d0ac54" stroke-width=".5"/><rect x="31.6" y="30.5" width="1.5" height="9" fill="#fff"/><rect x="31.6" y="39.5" width="1.5" height="2.2" fill="#3b8cf0"/><path d="M0 0L12.6 6.4L10.4 30L9.8 48L0 39Z" fill="url(#fyL)" stroke="#d9b860" stroke-width=".4"/></g><circle cx="607.5" cy="201" r="3.7" fill="#e02020" stroke="#fff" stroke-width=".5"/><path d="M606 199.5L609 202.5M609 199.5L606 202.5" stroke="#fff" stroke-width="1.2"/><rect x="257.5" y="250.5" width="15" height="15" fill="#fcfcfc" stroke="#5a96d8" stroke-width="1"/><path d="M259.5 255H265M259.5 261.5H265" stroke="#c4c4c4" stroke-width="1.4"/><path d="M265.6 254.6L267.6 257L271 252.4M265.6 261L267.6 263.4L271 258.8" stroke="#20a020" stroke-width="1.7" fill="none"/><ellipse cx="171.3" cy="687.3" rx="8" ry="7.8" fill="#000" opacity=".4" filter="url(#sh2)"/><circle cx="171.1" cy="685.9" r="8.2" fill="#fff"/><circle cx="171.1" cy="685.9" r="6.8" fill="url(#gk)"/><path d="M167.4 686.2L170 689.6L175 682" stroke="#fff" stroke-width="1.9" fill="none"/><rect x="263" y="679.8" width="14.6" height="14.6" rx="2.2" fill="url(#rx)" stroke="#4a8ee0" stroke-width="1.1"/><path d="M266.3 683.2L274.3 691.2M274.3 683.2L266.3 691.2" stroke="#fff" stroke-width="2.8" stroke-linecap="round"/><circle cx="18.7" cy="749" r="7.7" fill="url(#inf)" stroke="#7a8a9a" stroke-width=".5"/><rect x="17.8" y="746.8" width="1.9" height="6.4" fill="#f4f4f4"/><rect x="17.8" y="743.8" width="1.9" height="1.9" fill="#f4f4f4"/><circle cx="301.5" cy="746" r="3.4" fill="#e8c8a0"/><path d="M298 744.6Q301.5 740.5 305 744.6Q303 743.6 301.5 743.8Q300 743.6 298 744.6Z" fill="#6a5a4a"/><path d="M296 757Q296.5 750 301.5 750Q306.5 750 307 757Z" fill="#6a9ad0"/><path d="M304 747L309.5 744.5V750.5Z" fill="#b8b8b8"/><g transform="rotate(8 796 749)"><rect x="790" y="743.4" width="13" height="11" fill="#f8f8f8" stroke="#9a9a9a" stroke-width=".6"/><rect x="790" y="743.4" width="13" height="3" fill="#5a90e0"/><text x="796.5" y="753.2" font-family="Liberation Sans,sans-serif" font-size="6.5" font-weight="bold" text-anchor="middle" fill="#222">25</text></g><circle cx="961.2" cy="749.6" r="8" fill="#fbfbfb" stroke="#8a9aaa" stroke-width="1"/><path d="M961.2 749.6L957.5 742.5A8 8 0 0 1 968.9 751.5Z" fill="#e82020"/><path d="M961.2 749.6L966.5 755.5" stroke="#8a9aaa" stroke-width=".8"/><circle cx="33" cy="44" r="5.5" fill="none" stroke="#8a96a8" stroke-width="2" stroke-dasharray="2 1.4"/><circle cx="26.5" cy="43.5" r="3" fill="#ecd8a0"/><path d="M22 51.5Q22.5 46.5 26.5 46.5Q30.5 46.5 31 51.5Z" fill="#6aaa4a"/><circle cx="32" cy="43.6" r="3.2" fill="#c89868"/><path d="M28.8 43Q32 38.5 35.2 43Q33 41.8 32 42Q31 41.8 28.8 43Z" fill="#4a3a30"/><path d="M27 52Q27.5 47 32 47Q36.5 47 37 52Z" fill="#6a9ad8"/><path d="M99 41L105.5 44V52.5L99 49Z" fill="#d8b468"/><path d="M105.5 44L112 41V49L105.5 52.5Z" fill="#e8c884"/><path d="M99 41L105 38.5L112 41L105.5 44Z" fill="#f0dca8"/><path d="M102.5 37L108.5 36.6L110.5 41L104.5 42Z" fill="#d4e6fa" stroke="#a8c0e0" stroke-width=".4"/><path d="M171.5 40L178 42.5V52.5L171.5 49.5Z" fill="#c8873c"/><path d="M178 42.5L185 40V49.5L178 52.5Z" fill="#a86a28"/><path d="M171.5 40L178.5 37L185 40L178 42.5Z" fill="#e0a458"/><circle cx="249.8" cy="44.3" r="6.4" fill="#fdfdfd" stroke="#c0c0c8" stroke-width=".6"/><circle cx="249.8" cy="44.3" r="5" fill="url(#cp)"/><path d="M248.9 41.2h1.8v2.2h2.2v1.8h-2.2v2.2h-1.8v-2.2h-2.2v-1.8h2.2z" fill="#fff"/><ellipse cx="351" cy="45.6" rx="8.4" ry="4.2" fill="#7a8a9a"/><ellipse cx="351" cy="44.2" rx="8.4" ry="4.2" fill="#8ac06a"/><path d="M351 44.2L343 45.5A8.4 4.2 0 0 0 353 48.3Z" fill="#5a8ac8"/><path d="M351 44.2L353 48.3A8.4 4.2 0 0 0 355 40.5Z" fill="#d05050"/><circle cx="450.3" cy="45" r="7.5" fill="url(#pr)"/><path d="M446.5 41.2L454 48.8" stroke="#e8e8e8" stroke-width="2"/><path d="M454.2 41L446.3 49" stroke="#404040" stroke-width="1.8"/><circle cx="446.3" cy="41.2" r="1.6" fill="#e8e8e8"/><path d="M453.2 40.4L455 42.2" stroke="#e8e8e8" stroke-width="1.6"/><g transform="rotate(9 561 44)"><rect x="554.5" y="39" width="13.5" height="10.5" fill="#f8f8f8" stroke="#9a9a9a" stroke-width=".6"/><rect x="554.5" y="39" width="13.5" height="3" fill="#5a90e0"/><text x="561.3" y="48.4" font-family="Liberation Sans,sans-serif" font-size="6.5" font-weight="bold" text-anchor="middle" fill="#222">25</text></g><g transform="translate(686.8 37.2) scale(0.33)"><path d="M0 0L30.7 4.2V45.3L9.8 41.5Z" fill="url(#fyB)"/><path d="M10.5 9L15 7.4L16 37L10.5 40Z" fill="#bdbdbd"/><path d="M13 7.4H20.4L28.6 18.5V42.2L13 39.5Z" fill="url(#doc)"/><path d="M20.4 7.4L28.6 18.5L21.5 16.5Z" fill="#8d8d8d"/><path d="M20.4 7.4L27.5 17.2L22.3 15.2Z" fill="#f0f0f0"/><path d="M9.8 33L16 31L17 39.5L28.6 42.2L30.7 45.3L9.8 41.5Z" fill="#e0bd66"/><rect x="30.5" y="28.5" width="3.6" height="15" fill="#e6c870" stroke="#d0ac54" stroke-width=".5"/><rect x="31.6" y="30.5" width="1.5" height="9" fill="#fff"/><rect x="31.6" y="39.5" width="1.5" height="2.2" fill="#3b8cf0"/><path d="M0 0L12.6 6.4L10.4 30L9.8 48L0 39Z" fill="url(#fyL)" stroke="#d9b860" stroke-width=".4"/></g><circle cx="798.5" cy="44.9" r="7.5" fill="url(#aq)" stroke="#8a96b8" stroke-width=".6"/><text x="798.5" y="49.2" font-family="Liberation Sans,sans-serif" font-size="12" font-weight="bold" text-anchor="middle" fill="#fff">?</text></svg>
</body></html>
